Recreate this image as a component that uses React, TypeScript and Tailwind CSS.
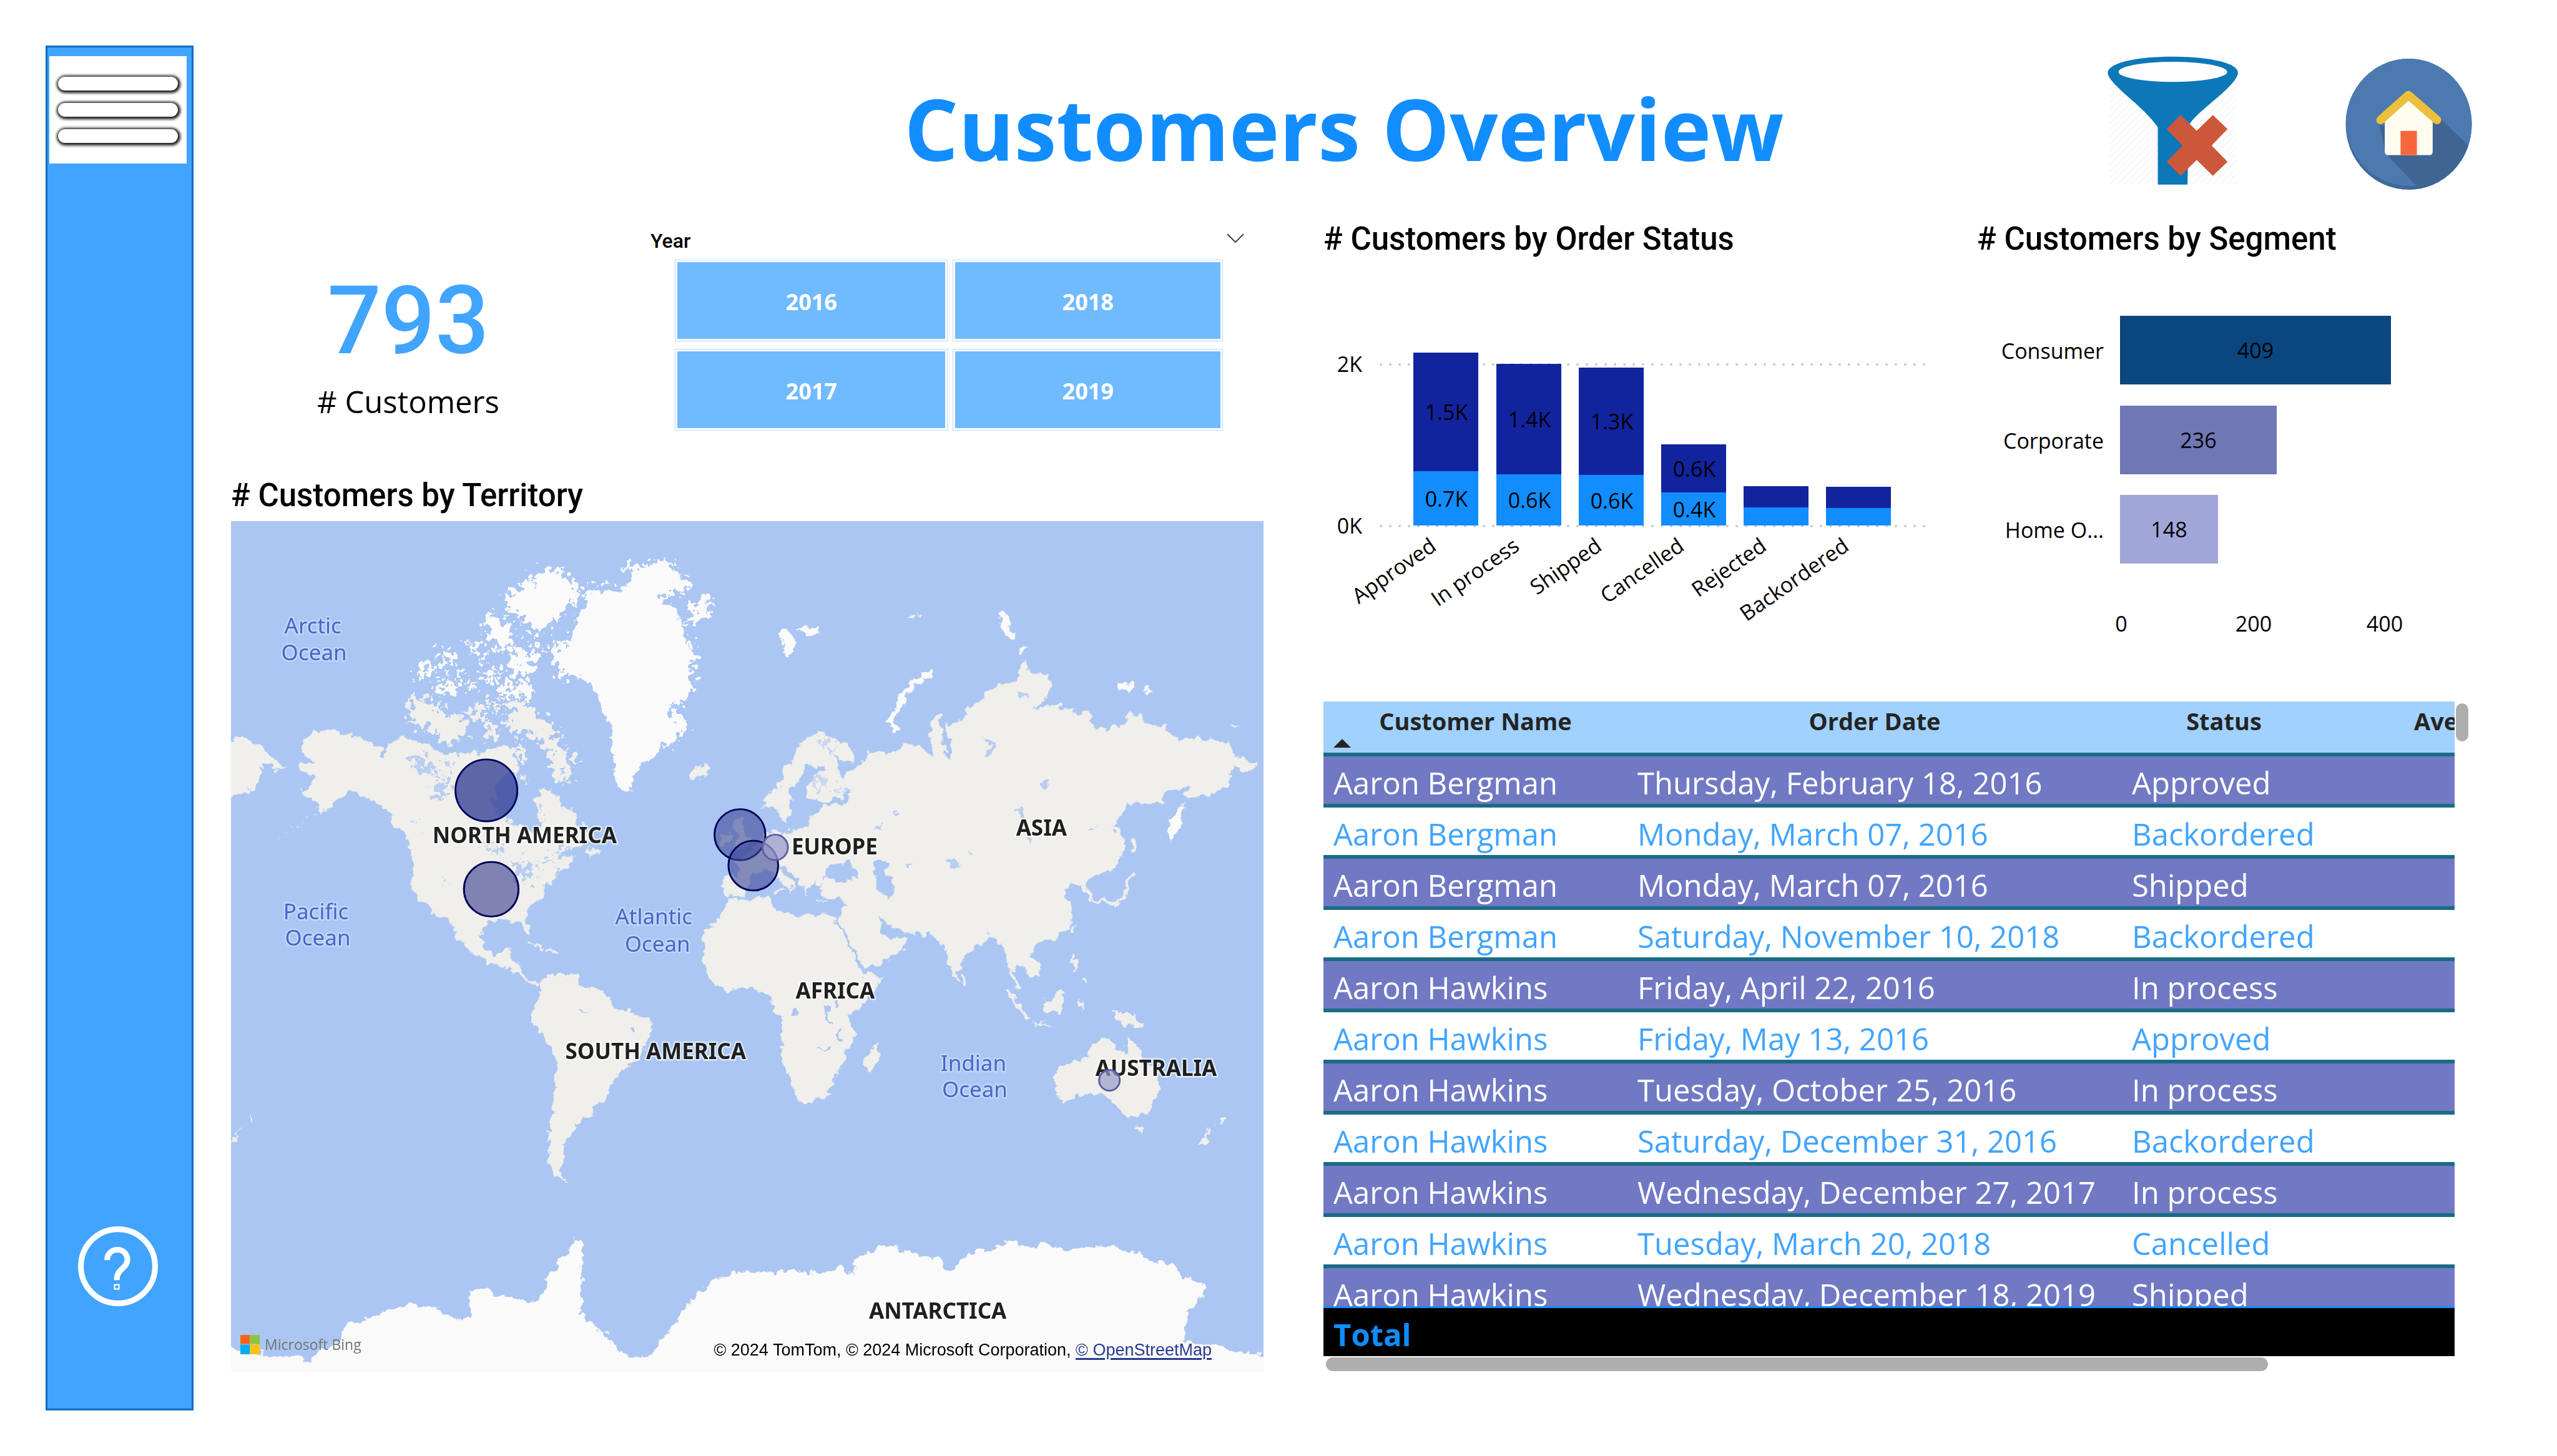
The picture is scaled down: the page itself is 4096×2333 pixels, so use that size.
import React from "react";

const years = ["2016", "2018", "2017", "2019"];

const statusBars = [
  { label: "Approved", x: 2264, top: 565, split: 755, upper: "1.5K", lower: "0.7K" },
  { label: "In process", x: 2397, top: 583, split: 760, upper: "1.4K", lower: "0.6K" },
  { label: "Shipped", x: 2529, top: 589, split: 761, upper: "1.3K", lower: "0.6K" },
  { label: "Cancelled", x: 2661, top: 712, split: 789, upper: "0.6K", lower: "0.4K" },
  { label: "Rejected", x: 2793, top: 779, split: 813, upper: "", lower: "" },
  { label: "Backordered", x: 2925, top: 780, split: 814, upper: "", lower: "" },
];

const segments = [
  { label: "Consumer", value: 409, y: 506, width: 434, fill: "#0a4680" },
  { label: "Corporate", value: 236, y: 650, width: 251, fill: "#7077b5" },
  { label: "Home O...", value: 148, y: 793, width: 157, fill: "#a1a6d8" },
];

const orders = [
  ["Aaron Bergman", "Thursday, February 18, 2016", "Approved"],
  ["Aaron Bergman", "Monday, March 07, 2016", "Backordered"],
  ["Aaron Bergman", "Monday, March 07, 2016", "Shipped"],
  ["Aaron Bergman", "Saturday, November 10, 2018", "Backordered"],
  ["Aaron Hawkins", "Friday, April 22, 2016", "In process"],
  ["Aaron Hawkins", "Friday, May 13, 2016", "Approved"],
  ["Aaron Hawkins", "Tuesday, October 25, 2016", "In process"],
  ["Aaron Hawkins", "Saturday, December 31, 2016", "Backordered"],
  ["Aaron Hawkins", "Wednesday, December 27, 2017", "In process"],
  ["Aaron Hawkins", "Tuesday, March 20, 2018", "Cancelled"],
  ["Aaron Hawkins", "Wednesday, December 18, 2019", "Shipped"],
];

const continents = [
  { name: "NORTH AMERICA", x: 865, y: 1390 },
  { name: "EUROPE", x: 1376, y: 1409 },
  { name: "ASIA", x: 1717, y: 1378 },
  { name: "AFRICA", x: 1377, y: 1646 },
  { name: "SOUTH AMERICA", x: 1081, y: 1746 },
  { name: "AUSTRALIA", x: 1906, y: 1774 },
  { name: "ANTARCTICA", x: 1546, y: 2174 },
];

const oceans = [
  { name: "Arctic", x: 516, y: 1044 },
  { name: "Ocean", x: 518, y: 1088 },
  { name: "Pacific", x: 521, y: 1516 },
  { name: "Ocean", x: 524, y: 1559 },
  { name: "Atlantic", x: 1078, y: 1524 },
  { name: "Ocean", x: 1084, y: 1569 },
  { name: "Indian", x: 1605, y: 1766 },
  { name: "Ocean", x: 1607, y: 1809 },
];

const bubbles = [
  { x: 802, y: 1303, r: 51, fill: "#3a4496", o: 0.8, stroke: "#00005a" },
  { x: 810, y: 1466, r: 45, fill: "#34398c", o: 0.6, stroke: "#00005a" },
  { x: 1220, y: 1376, r: 42, fill: "#3c4798", o: 0.6, stroke: "#00005a" },
  { x: 1242, y: 1427, r: 41, fill: "#3c4798", o: 0.6, stroke: "#00005a" },
  { x: 1278, y: 1397, r: 21, fill: "#9a9bcb", o: 0.75, stroke: "#5c5fa0" },
  { x: 1829, y: 1781, r: 17, fill: "#9a9bcb", o: 0.7, stroke: "#5c5fa0" },
];

function SideBar() {
  return (
    <nav
      aria-label="Report navigation"
      className="flex w-[237px] shrink-0 flex-col justify-between border-[3px] border-[#0f6cbf] bg-[#41a4ff] pt-[14px] pb-[164px]"
    >
      <button
        type="button"
        aria-label="Menu"
        className="ml-[3px] flex h-[172px] w-[220px] flex-col items-center gap-5 bg-white pt-[33px]"
      >
        {[0, 1, 2].map((i) => (
          <span
            key={i}
            className="block h-[22px] w-[192px] rounded-full bg-white shadow-[1px_1px_4px_3px_#1c1c1c]"
          />
        ))}
      </button>
      <button type="button" aria-label="Help" className="mr-[6px] self-center">
        <svg viewBox="205 186 392 392" className="size-[128px]" fill="none" stroke="#fff" strokeWidth="28">
          <circle cx="401" cy="382" r="182" />
          <path d="M348 352C348 321 370 301 398 301C427 301 447 322 447 350C447 394 395 390 395 450" />
          <path fill="#fff" stroke="none" d="M381 469H409V497H381Z" />
          <path fill="#41a4ff" stroke="none" d="M395 473L405 483L395 493L385 483Z" />
        </svg>
      </button>
    </nav>
  );
}

function FunnelIcon() {
  return (
    <svg viewBox="272 32 217 213" className="h-[206px] w-[210px]">
      <defs>
        <pattern id="hatch" width="8" height="12" patternUnits="userSpaceOnUse" patternTransform="rotate(45)">
          <path d="M0 0V12" stroke="#eeeeee" strokeWidth="2" />
        </pattern>
      </defs>
      <rect x="275" y="33" width="211" height="211" fill="url(#hatch)" />
      <g transform="scale(.63776 .33333)">
        <path
          fill="#0c78b8"
          d="M427 178C427 130 500 98 597 98C690 98 765 130 765 178C765 215 725 280 700 320C670 370 645 410 638 440L634 734H557V450C540 400 505 340 475 290C450 245 427 205 427 178Z"
        />
        <ellipse cx="596" cy="174" rx="141" ry="50" fill="#fdfdfd" />
        <path
          fill="#cd573a"
          d="M616 388L658 467L700 388L738 458L697 540L738 621L700 691L658 612L616 691L580 621L621 540L580 458Z"
        />
      </g>
    </svg>
  );
}

function HomeIcon() {
  return (
    <svg viewBox="663 37 209 216" className="h-[210px] w-[203px]">
      <defs>
        <clipPath id="disc">
          <ellipse cx="767.5" cy="145" rx="104" ry="108" />
        </clipPath>
      </defs>
      <g clipPath="url(#disc)">
        <rect x="660" y="30" width="220" height="230" fill="#40689a" />
        <ellipse cx="770" cy="140" rx="106" ry="107" fill="#4c7ab0" />
        <path d="M822 138L872 186V260H793L730 194L719 147Z" fill="#406593" />
      </g>
      <path d="M728 140L767 101L807 140V190Q807 196 802 196H733Q728 196 728 190Z" fill="#fffdf0" />
      <path d="M754 156H781V196H754Z" fill="#f8663d" />
      <path
        d="M721 138L767 97L814 138"
        fill="none"
        stroke="#ecbf3c"
        strokeWidth="14"
        strokeLinecap="round"
        strokeLinejoin="round"
      />
    </svg>
  );
}

function Slicer() {
  return (
    <section aria-label="Year" className="flex-1 pt-[3px] pr-[31px]">
      <div className="flex h-[60px] items-center justify-between">
        <h2 className="font-[Roboto,sans-serif] text-[32px] leading-[60px] font-medium">Year</h2>
        <button type="button" aria-label="Slicer options">
          <svg viewBox="0 0 28 16" className="mb-2 h-4 w-7" fill="none" stroke="#444" strokeWidth="2">
            <path d="M1 1L14 14L27 1" />
          </svg>
        </button>
      </div>
      <div className="mr-[34px] ml-[39px] grid grid-cols-[438fr_433fr] gap-x-2 gap-y-3">
        {years.map((y) => (
          <button
            key={y}
            type="button"
            className="h-[131px] border border-[#b5dbff] bg-white p-[3px] text-[36px] font-bold text-white"
          >
            <span className="flex h-full items-center justify-center bg-[#70baff] pt-1">{y}</span>
          </button>
        ))}
      </div>
    </section>
  );
}

function WorldMap() {
  return (
    <div className="relative mt-[11px] overflow-hidden">
      <svg viewBox="381 859 1702 1404" className="block w-full" role="img" aria-label="Customers by territory map">
        <defs>
          <filter id="coast" x="-5%" y="-5%" width="110%" height="110%">
            <feTurbulence type="fractalNoise" baseFrequency="0.07" numOctaves="3" seed="4" result="n" />
            <feDisplacementMap in="SourceGraphic" in2="n" scale="20" xChannelSelector="R" yChannelSelector="G" />
          </filter>
          <filter id="fjords" x="-5%" y="-5%" width="110%" height="110%">
            <feTurbulence type="fractalNoise" baseFrequency="0.09" numOctaves="3" seed="9" result="n" />
            <feDisplacementMap in="SourceGraphic" in2="n" scale="55" xChannelSelector="R" yChannelSelector="G" />
          </filter>
        </defs>
        <rect x="381" y="859" width="1702" height="1404" fill="#abc6f2" />
        <g filter="url(#coast)" fill="#f0efeb" stroke="#f0efeb" strokeLinecap="round" strokeLinejoin="round">
          <g transform="translate(370 850) scale(.57398 .5102)">
            <path d="M255 700L300 697L360 710L400 720L440 745L455 785L470 740L510 715L540 725L580 740L610 765L670 770L740 765L790 745L820 760L835 785L845 840L810 830L785 860L775 900L770 950L800 985L850 1000L885 1030L905 1000L895 920L905 885L930 880L950 900L965 940L1000 950L1010 990L1040 1010L1060 1040L1030 1065L980 1085L950 1105L1005 1100L990 1130L960 1150L950 1180L920 1190L915 1230L890 1250L865 1280L862 1300L880 1345L870 1350L850 1310L800 1305L750 1315L740 1360L745 1400L770 1418L795 1412L805 1395L825 1392L820 1430L850 1445L850 1475L870 1500L905 1508L895 1520L860 1500L830 1470L790 1455L750 1437L710 1415L680 1380L665 1345L640 1310L600 1280L570 1250L545 1215L540 1150L540 1090L525 1050L515 1020L490 1000L480 960L440 930L400 908L360 890L340 905L320 930L280 965L270 930L220 890L250 870L265 840L210 825L215 800L260 800L220 760L225 740Z" />
            <path d="M0 735L50 715L100 735L130 775L170 800L175 815L150 825L112 800L100 850L90 880L50 895L0 915Z" />
            <path d="M1035 1085L1060 1070L1075 1085L1055 1105ZM860 830L870 860L850 855Z" />
            <path d="M1335 830L1360 812L1390 812L1390 840L1350 858L1335 850Z" />
            <path d="M880 1380L915 1395M930 1408L960 1412M820 1410L800 1420" strokeWidth="7" fill="none" />
            <path d="M270 945L210 1010L150 1045" strokeWidth="2" fill="none" strokeDasharray="6 14" />
          </g>
          <g transform="translate(370 850) scale(.57398 .5102)" fill="#fafafa" stroke="#fafafa">
            <path d="M1005 385L985 440L985 480L1000 515L1030 520L1065 560L1085 620L1105 680L1115 740L1122 830L1125 875L1145 890L1165 885L1178 840L1198 800L1235 785L1255 740L1295 725L1305 690L1275 650L1285 600L1320 590L1335 540L1325 490L1328 430L1315 350L1290 300L1240 260L1300 230L1310 205L1290 165L1250 150L1215 165L1180 200L1130 245L1060 260L1030 300L1010 340Z" />
          </g>
          <g transform="translate(1150 850) scale(.60587 .5102)">
            <path d="M100 1110L140 1090L180 1040L210 1015L235 1030L260 1015L295 1010L300 985L330 955L345 935L400 935L415 900L400 860L410 830L450 800L465 765L500 765L540 755L580 735L620 755L640 790L635 660L655 635L665 680L670 780L690 790L690 740L675 700L685 665L720 660L740 650L730 620L780 600L780 570L830 545L870 530L875 490L890 475L910 510L955 510L962 560L940 600L910 625L980 615L1010 630L1060 635L1080 680L1110 690L1150 680L1180 640L1230 670L1300 700L1310 725L1370 720L1440 725L1470 780L1520 800L1515 820L1490 830L1455 800L1445 870L1400 895L1335 915L1325 900L1340 870L1280 895L1265 920L1170 930L1150 980L1130 1005L1160 1040L1160 1090L1130 1140L1080 1165L1060 1190L1075 1235L1080 1245L1062 1245L1045 1200L1020 1190L1000 1200L1005 1240L1020 1290L1010 1330L980 1360L915 1385L905 1420L930 1450L930 1485L905 1485L870 1440L858 1465L880 1530L865 1525L845 1425L830 1390L795 1355L750 1400L720 1430L710 1500L700 1500L680 1430L665 1370L640 1360L600 1350L540 1335L510 1320L490 1290L500 1345L520 1365L568 1370L560 1400L500 1440L455 1460L440 1430L410 1370L378 1300L390 1290L402 1245L390 1235L345 1232L330 1205L345 1190L300 1190L300 1225L285 1200L265 1160L240 1135L222 1130L230 1155L262 1190L255 1215L235 1195L215 1160L180 1145L145 1155L130 1220L80 1235L68 1200L72 1165L110 1165L120 1140Z" />
            <path d="M180 945L185 905L220 880L230 840L260 790L275 735L330 700L370 720L420 750L430 785L400 795L375 770L385 830L410 880L390 915L345 925L300 910L300 870L320 840L350 820L330 805L290 810L285 850L255 880L252 950L240 990L225 975L220 940Z" />
            <path d="M95 985L118 975L125 1020L145 1050L135 1075L95 1080L110 1040ZM68 1030L90 1025L88 1060L68 1065Z" />
            <path d="M220 380L250 370L265 410L250 460L235 430ZM270 360L325 360L325 385L300 390ZM815 320L840 310L850 360L865 400L840 395ZM872 420L900 430L880 450ZM1145 540L1190 540L1180 570L1150 565ZM1215 555L1238 568L1220 572ZM1325 930L1318 990L1290 1050L1278 1020L1300 960ZM1450 680L1470 678L1460 686ZM578 325L590 325L585 335ZM598 318L606 320L602 328Z" fill="#fafafa" />
            <path d="M630 510L585 545L560 580L540 630L523 662L545 690" fill="none" stroke="#fafafa" strokeWidth="16" />
            <path d="M1188 1155L1165 1200L1160 1235L1130 1255L1085 1245M1185 1040L1190 1080M1022 1330L1018 1345M725 1495L728 1518M1020 1420L1030 1470M1050 1500L1055 1515" fill="none" strokeWidth="9" />
            <path d="M215 1210L235 1212M330 1245L345 1247" fill="none" strokeWidth="6" />
          </g>
          <path d="M1195 1493L1205 1483L1271 1480L1277 1500L1320 1513L1326 1506L1374 1511L1392 1549L1411 1585L1423 1608L1456 1610L1430 1645L1402 1676L1408 1716L1391 1738L1380 1774L1358 1810L1319 1818L1302 1779L1287 1734L1294 1694L1274 1658L1268 1636L1240 1627L1196 1633L1168 1612L1159 1580L1162 1539L1186 1513Z" />
          <g transform="translate(370 1600) scale(1.11607 .44643)">
            <path d="M465 45L480 15L520 20L530 60L560 75L575 140L600 155L628 175L630 220L610 330L580 380L560 485L540 500L543 540L520 560L515 600L500 640L505 700L492 740L505 785L485 750L480 680L480 580L488 450L493 330L470 240L453 180L455 130L470 90Z" />
            <path d="M965 270L968 300L955 380L945 370L948 320Z" />
            <path d="M1228 370L1250 340L1275 320L1280 280L1300 250L1315 260L1313 290L1332 310L1338 240L1350 310L1375 370L1380 430L1365 530L1335 540L1320 500L1300 455L1270 460L1235 492L1228 440Z" />
            <path d="M1347 575L1358 580L1355 602ZM1478 530L1473 570L1468 560ZM1458 580L1446 645L1438 645ZM1310 150L1345 160L1358 210L1330 205ZM1238 70L1235 150L1212 155L1210 120ZM1262 110L1272 115L1265 150ZM28 580L8 640L5 640ZM42 530L38 560L36 550Z" />
            <path d="M1157 70L1188 175" fill="none" strokeWidth="6" />
            <path d="M1196 194L1220 200" fill="none" strokeWidth="6" />
            <path
              fill="#fafafa"
              d="M-20 1385L30 1405L70 1420L110 1425L125 1450L140 1400L170 1370L180 1310L230 1270L270 1230L320 1250L350 1300L365 1270L362 1180L385 1170L400 1200L430 1205L450 1240L470 1210L480 1120L500 1060L520 985L530 1010L525 1270L560 1340L590 1420L630 1420L655 1340L690 1220L720 1150L760 1115L840 1110L880 1120L910 1085L925 1130L940 1050L985 1005L1000 1045L1050 1060L1070 1110L1100 1040L1150 1020L1155 990L1190 1025L1215 1010L1240 1035L1310 1015L1350 1050L1400 1090L1420 1130L1445 1160L1447 1200L1430 1240L1420 1300L1415 1370L1460 1390L1500 1410L1570 1425V1540H-20Z"
            />
          </g>
          <g transform="translate(1150 850) scale(.60587 .5102)" fill="#abc6f2" stroke="none">
            <path d="M338 1180L345 1145L362 1120L398 1122L420 1112L425 1135L442 1168L400 1182L365 1180Z" />
            <path d="M480 1120L522 1115L505 1150L530 1175L530 1232L502 1235L490 1200L480 1160Z" />
            <path d="M775 725L800 720L815 750L790 785L780 760L800 745ZM860 945L880 935L890 975L875 970ZM930 860L955 850L950 885L938 880ZM480 1005L505 990L495 1015ZM530 960L550 955L540 980ZM670 1120L710 1110L715 1135L690 1140ZM735 1090L750 1085L745 1105ZM560 1130L580 1120L570 1145ZM890 1045L915 1040L905 1058ZM1060 1010L1085 1005L1080 1020ZM865 570L905 572L885 595Z" opacity=".8" />
          </g>
          <g transform="translate(370 1600) scale(1.11607 .44643)" fill="none" stroke="#abc6f2" strokeWidth="4">
            <path d="M889 130L890 170L897 205M905 110L903 145M908 220L908 265M880 295L895 290M842 140L846 160M528 135L537 150M604 215L605 225" />
          </g>
        </g>
        <g filter="url(#fjords)" stroke="none">
          <g transform="translate(370 850) scale(.57398 .5102)" fill="#f0efeb">
            <path d="M540 590L600 600L640 640L690 660L705 710L640 740L600 700L540 670L530 630Z" />
            <path d="M812 610L870 600L910 650L950 700L980 760L1015 795L980 805L990 860L960 860L935 830L945 790L900 720L870 700L820 700Z" />
            <path d="M705 605L755 615L745 670L708 650ZM750 675L785 675L780 720L750 712ZM835 735L865 745L860 790L835 780ZM765 600L800 605L780 635Z" />
          </g>
          <g transform="translate(370 850) scale(.57398 .5102)" fill="#fafafa">
            <path d="M800 280L860 215L920 180L980 185L1020 235L1000 280L960 330L930 370L890 385L865 340L820 310Z" />
            <path d="M765 310L800 330L835 400L825 435L775 415L750 355ZM825 440L915 415L890 485L870 520L815 500ZM790 540L885 540L880 585L795 580ZM620 435L655 420L650 475L625 480ZM690 405L745 425L750 465L720 460ZM730 505L785 495L775 545ZM600 540L640 530L685 555L650 585L610 570ZM545 520L580 475L610 495L585 525ZM660 500L690 495L685 525L665 520ZM690 550L720 545L715 570Z" />
            <path d="M1330 290L1400 265L1400 295L1360 340L1335 360ZM1240 255L1310 200L1335 215L1320 245L1270 262ZM1030 250L1110 230L1120 260L1040 290ZM945 425L1000 400L1010 510L970 525L950 480ZM1320 390L1350 440L1340 560L1315 600L1290 600ZM1285 620L1320 650L1325 690L1300 730L1265 740L1280 680ZM1160 170L1250 145L1300 160L1240 190L1170 210Z" />
          </g>
          <g transform="translate(370 850) scale(.57398 .5102)" fill="#abc6f2">
            <path d="M530 790L590 780L600 815L550 825ZM595 865L635 860L645 905L610 910ZM590 820L625 835L600 855ZM640 800L665 800L655 830ZM850 1120L905 1145L880 1175L855 1180L815 1110ZM905 1110L945 1105L920 1130ZM745 1060L805 1070L790 1095ZM950 1085L990 1070L970 1110ZM900 960L920 955L915 985ZM625 1180L645 1178L635 1192ZM530 985L550 985L545 1005Z" opacity=".8" />
          </g>
          <g transform="translate(1150 850) scale(.60587 .5102)" fill="#abc6f2">
            <path d="M300 850L345 840L340 870L310 880ZM330 720L360 715L375 755L345 760ZM385 860L400 900L390 905Z" opacity=".6" />
          </g>
        </g>
        <g fontFamily="'Noto Sans','Open Sans',sans-serif" textAnchor="middle" paintOrder="stroke" strokeLinejoin="round">
          <g fontSize="36" fontWeight="700" fill="#1f1f1f" stroke="#ffffff" strokeOpacity=".6" strokeWidth="5">
            {continents.map((c) => (
              <text key={c.name} x={c.x} y={c.y}>
                {c.name}
              </text>
            ))}
          </g>
          <g fontSize="36" fill="#4568c9" stroke="#c3d6f7" strokeWidth="5">
            {oceans.map((o) => (
              <text key={o.name + o.x} x={o.x} y={o.y}>
                {o.name}
              </text>
            ))}
          </g>
        </g>
        {bubbles.map((b) => (
          <circle
            key={b.x}
            cx={b.x}
            cy={b.y}
            r={b.r}
            fill={b.fill}
            fillOpacity={b.o}
            stroke={b.stroke}
            strokeWidth="3"
          />
        ))}
      </svg>
      <div className="absolute bottom-[24px] left-[15px] flex items-center gap-2 text-[23px] leading-[42px] text-[#737373]">
        <svg viewBox="0 0 32 32" className="size-[31px]">
          <path fill="#f4641f" d="M0 0H16V15H0Z" />
          <path fill="#8bc63e" d="M16 0H32V15H16Z" />
          <path fill="#00adef" d="M0 16H16V32H0Z" />
          <path fill="#ffc20e" d="M16 16H32V32H16Z" />
        </svg>
        Microsoft Bing
      </div>
      <p className="absolute right-[83px] bottom-[18px] font-['Liberation_Sans',Arial,sans-serif] text-[27px] leading-[36px] text-black">
        © 2024 TomTom, © 2024 Microsoft Corporation,{" "}
        <a href="#osm" className="text-[#253a90] underline decoration-[3px] underline-offset-[4px]">
          © OpenStreetMap
        </a>
      </p>
    </div>
  );
}

function StatusChart() {
  return (
    <svg viewBox="2120 413 1047 711" className="block w-full" fontSize="34" role="img" aria-label="Customers by order status">
      <g stroke="#c8c8c8" strokeWidth="4" strokeLinecap="round" strokeDasharray="0 15">
        <path d="M2212 584H3084" />
        <path d="M2212 843H3084" />
      </g>
      <text x="2182" y="596" textAnchor="end">2K</text>
      <text x="2182" y="855" textAnchor="end">0K</text>
      {statusBars.map((b) => (
        <g key={b.label}>
          <rect x={b.x} y={b.top} width="104" height={b.split - b.top} fill="#12239e" />
          <rect x={b.x} y={b.split} width="104" height={842 - b.split} fill="#118dff" />
          <text x={b.x + 53} y={(b.top + b.split) / 2 + 13} textAnchor="middle">
            {b.upper}
          </text>
          <text x={b.x + 53} y={(b.split + 842) / 2 + 13} textAnchor="middle">
            {b.lower}
          </text>
          <text transform={`translate(${b.x + 39} 880) rotate(-35)`} textAnchor="end">
            {b.label}
          </text>
        </g>
      ))}
    </svg>
  );
}

function SegmentChart() {
  return (
    <svg viewBox="3167 413 787 711" className="block w-full" fontSize="34" role="img" aria-label="Customers by segment">
      {segments.map((s) => (
        <g key={s.label}>
          <text x="3370" y={s.y + 69} textAnchor="end">
            {s.label}
          </text>
          <rect x="3396" y={s.y} width={s.width} height="110" fill={s.fill} />
          <text x={3396 + s.width / 2} y={s.y + 68} textAnchor="middle">
            {s.value}
          </text>
        </g>
      ))}
      <text x="3398" y="1012" textAnchor="middle">0</text>
      <text x="3610" y="1012" textAnchor="middle">200</text>
      <text x="3820" y="1012" textAnchor="middle">400</text>
    </svg>
  );
}

function OrdersTable() {
  return (
    <div className="grid grid-cols-[1fr_20px] gap-x-0.5">
      <div className="overflow-hidden">
        <div className="h-[969px] overflow-hidden">
          <table className="w-full table-fixed border-collapse whitespace-nowrap">
            <colgroup>
              <col className="w-[487px]" />
              <col className="w-[792px]" />
              <col className="w-[327px]" />
              <col />
            </colgroup>
            <thead>
              <tr className="h-[85px] border-b-[6px] border-[#1a6b85] bg-[#a0d1ff] align-top text-[38px] leading-[62px] text-[#252423]">
                <th className="relative p-0 font-bold">
                  Customer Name
                  <svg viewBox="0 0 28 14" className="absolute bottom-2 left-4 h-[14px] w-[28px]">
                    <path d="M0 14L14 0L28 14Z" fill="#252423" />
                  </svg>
                </th>
                <th className="p-0 font-bold">Order Date</th>
                <th className="p-0 font-bold">Status</th>
                <th className="overflow-hidden p-0 pl-[141px] text-left font-bold">Average</th>
              </tr>
            </thead>
            <tbody className="text-[49px] leading-[68px]">
              {orders.map(([name, date, status], i) => (
                <tr
                  key={i}
                  className="h-[82px] border-b-[6px] border-[#1a6b85] text-[#41a4ff] odd:bg-[#7179c4] odd:text-white"
                >
                  <td className="p-0 pt-2 pl-4">{name}</td>
                  <td className="p-0 pt-2 pl-4">{date}</td>
                  <td className="p-0 pt-2 pl-4">{status}</td>
                  <td />
                </tr>
              ))}
            </tbody>
          </table>
        </div>
        <div className="h-[80px] border-t-[3px] border-[#118dff] bg-black pt-2 pl-4 text-[49px] leading-[68px] font-bold text-[#118dff]">
          Total
        </div>
        <div className="mt-0.5 mr-[299px] ml-1 h-[22px] rounded-full bg-[#aeaeac]" />
      </div>
      <div className="mt-[3px] h-[61px] rounded-full bg-[#aeaeae]" />
    </div>
  );
}

const heading = "font-[Roboto,sans-serif] text-[51px] font-medium leading-[60px] whitespace-nowrap";

export default function App() {
  return (
    <div className="flex min-h-screen bg-white py-[73px] pr-[136px] pl-[73px] font-['Open_Sans',sans-serif] text-black">
      <SideBar />
      <main className="ml-[60px] min-w-0 flex-1 pt-[17px]">
        <header className="grid h-[214px] grid-cols-[1078fr_1410fr_1102fr]">
          <h1 className="col-start-2 pt-5 text-center text-[136px] leading-[192px] font-bold whitespace-nowrap text-[#118dff]">
            Customers Overview
          </h1>
          <div className="flex items-start justify-end gap-[171px]">
            <button type="button" aria-label="Clear all filters">
              <FunnelIcon />
            </button>
            <a href="#home" aria-label="Home" className="mt-1">
              <HomeIcon />
            </a>
          </div>
        </header>
        <div className="mt-[49px] mr-1.5 grid grid-cols-[1654fr_1834fr] gap-x-24">
          <div className="min-w-0">
            <div className="flex gap-[104px]">
              <section className="flex w-[568px] flex-col items-center pt-20">
                <p className="font-[Roboto,sans-serif] text-[152px] leading-[162px] font-medium text-[#41a4ff]">793</p>
                <p className="mt-[18px] text-[49px] leading-[60px]"># Customers</p>
              </section>
              <Slicer />
            </div>
            <h2 className={`mt-[74px] ${heading}`}># Customers by Territory</h2>
            <WorldMap />
          </div>
          <div className="min-w-0">
            <div className="grid grid-cols-[1047fr_787fr]">
              <section>
                <h2 className={heading}># Customers by Order Status</h2>
                <StatusChart />
              </section>
              <section>
                <h2 className={heading}># Customers by Segment</h2>
                <SegmentChart />
              </section>
            </div>
            <OrdersTable />
          </div>
        </div>
      </main>
    </div>
  );
}
